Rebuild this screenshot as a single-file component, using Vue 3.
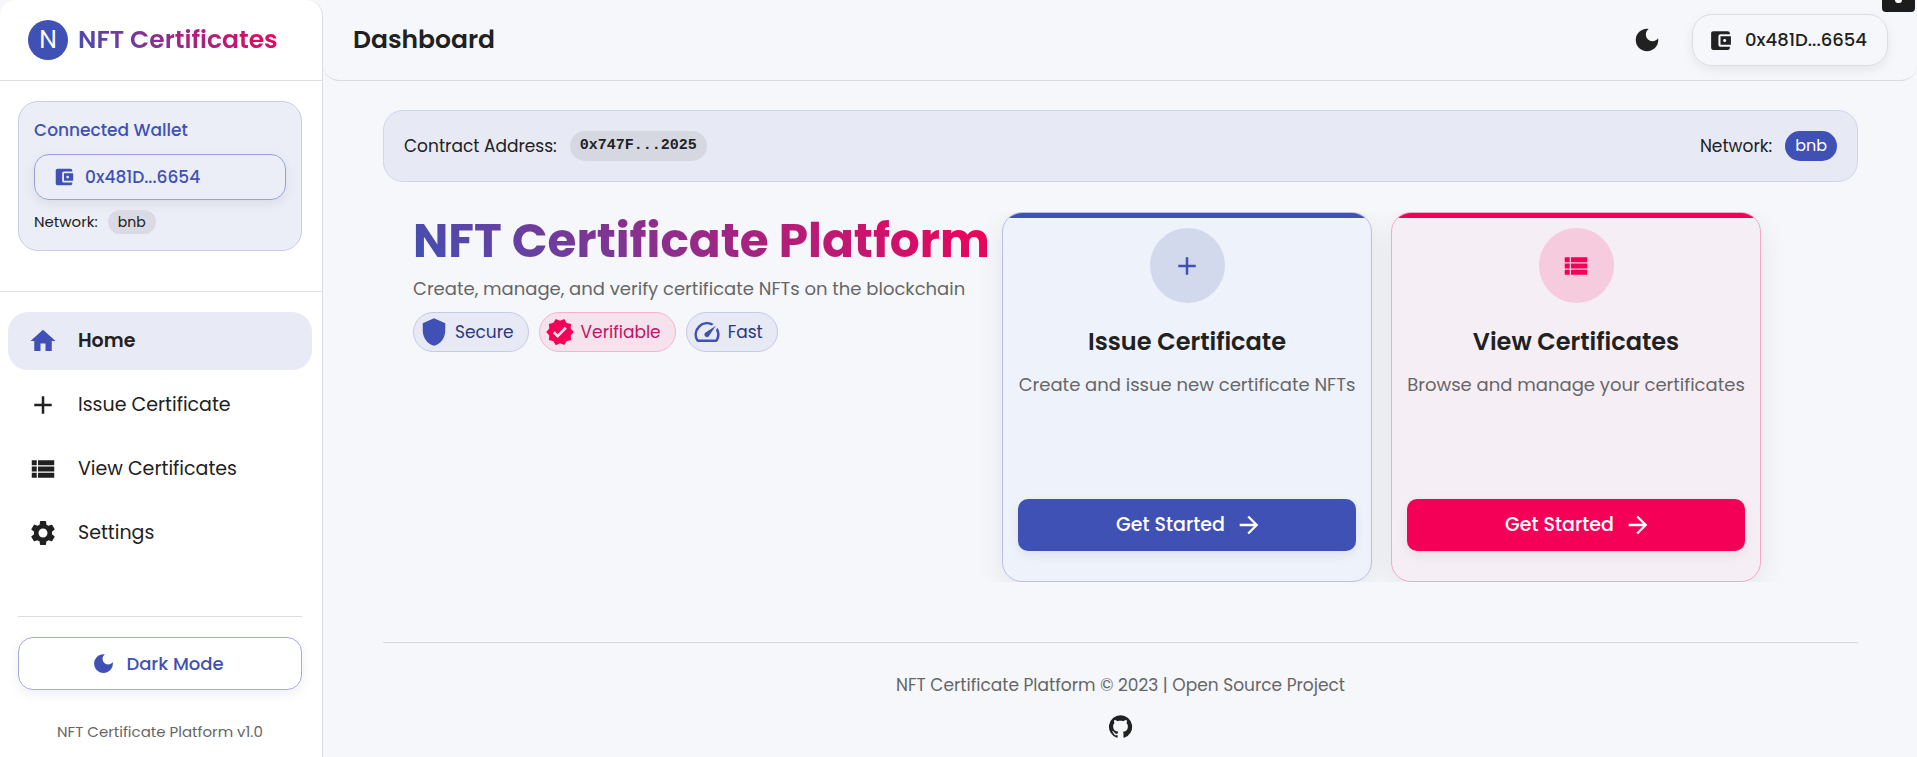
<script setup>
import { ref } from 'vue'

const icons = {
  home: 'M10 20v-6h4v6h5v-8h3L12 3 2 12h3v8z',
  add: 'M19 13h-6v6h-2v-6H5v-2h6V5h2v6h6z',
  list: 'M3 14h4v-4H3zm0 5h4v-4H3zM3 9h4V5H3zm5 5h13v-4H8zm0 5h13v-4H8zM8 5v4h13V5z',
  settings:
    'M19.14 12.94c.04-.3.06-.61.06-.94 0-.32-.02-.64-.07-.94l2.03-1.58c.18-.14.23-.41.12-.61l-1.92-3.32c-.12-.22-.37-.29-.59-.22l-2.39.96c-.5-.38-1.03-.7-1.62-.94l-.36-2.54c-.04-.24-.24-.41-.48-.41h-3.84c-.24 0-.43.17-.47.41l-.36 2.54c-.59.24-1.13.57-1.62.94l-2.39-.96c-.22-.08-.47 0-.59.22L2.74 8.87c-.12.21-.08.47.12.61l2.03 1.58c-.05.3-.09.63-.09.94s.02.64.07.94l-2.03 1.58c-.18.14-.23.41-.12.61l1.92 3.32c.12.22.37.29.59.22l2.39-.96c.5.38 1.03.7 1.62.94l.36 2.54c.05.24.24.41.48.41h3.84c.24 0 .44-.17.47-.41l.36-2.54c.59-.24 1.13-.56 1.62-.94l2.39.96c.22.08.47 0 .59-.22l1.92-3.32c.12-.22.07-.47-.12-.61zM12 15.6c-1.98 0-3.6-1.62-3.6-3.6s1.62-3.6 3.6-3.6 3.6 1.62 3.6 3.6-1.62 3.6-3.6 3.6z',
  wallet:
    'M21 18v1c0 1.1-.9 2-2 2H5c-1.11 0-2-.9-2-2V5c0-1.1.89-2 2-2h14c1.1 0 2 .9 2 2v1h-9c-1.11 0-2 .9-2 2v8c0 1.1.89 2 2 2zm-9-2h10V8H12zm4-2.5c-.83 0-1.5-.67-1.5-1.5s.67-1.5 1.5-1.5 1.5.67 1.5 1.5-.67 1.5-1.5 1.5z',
  moon: 'M12 3c-4.97 0-9 4.03-9 9s4.03 9 9 9 9-4.03 9-9c0-.46-.04-.92-.1-1.36-.98 1.37-2.58 2.26-4.4 2.26-2.98 0-5.4-2.42-5.4-5.4 0-1.81.89-3.42 2.26-4.4-.44-.06-.9-.1-1.36-.1z',
  shield: 'M12 1 3 5v6c0 5.55 3.84 10.74 9 12 5.16-1.26 9-6.45 9-12V5z',
  verified:
    'm23 12-2.44-2.79.34-3.69-3.61-.82-1.89-3.2L12 2.96 8.6 1.5 6.71 4.69 3.1 5.5l.34 3.7L1 12l2.44 2.79-.34 3.7 3.61.82L8.6 22.5l3.4-1.47 3.4 1.46 1.89-3.19 3.61-.82-.34-3.69zm-12.91 4.72-3.8-3.81 1.48-1.48 2.32 2.33 5.85-5.87 1.48 1.48z',
  speed:
    'm20.38 8.57-1.23 1.85a8 8 0 0 1-.22 7.58H5.07A8 8 0 0 1 15.58 6.85l1.85-1.23A10 10 0 0 0 3.35 19a2 2 0 0 0 1.72 1h13.85a2 2 0 0 0 1.74-1 10 10 0 0 0-.27-10.44zm-9.79 6.84a2 2 0 0 0 2.83 0l5.66-8.49-8.49 5.66a2 2 0 0 0 0 2.83',
  arrow: 'm12 4-1.41 1.41L16.17 11H4v2h12.17l-5.58 5.59L12 20l8-8z',
  github:
    'M12 1.27a11 11 0 0 0-3.48 21.46c.55.09.73-.28.73-.55v-1.84c-3.03.64-3.67-1.46-3.67-1.46-.55-1.29-1.28-1.65-1.28-1.65-.92-.65.1-.65.1-.65 1.1 0 1.73 1.1 1.73 1.1.92 1.65 2.57 1.2 3.21.92a2 2 0 0 1 .64-1.47c-2.47-.27-5.04-1.19-5.04-5.5 0-1.1.46-2.1 1.2-2.84a3.76 3.76 0 0 1 0-2.93s.91-.28 3.11 1.1c1.8-.49 3.7-.49 5.5 0 2.1-1.38 3.02-1.1 3.02-1.1a3.76 3.76 0 0 1 .1 2.93c.83.74 1.2 1.74 1.2 2.94 0 4.21-2.57 5.13-5.04 5.4.45.37.82.92.82 2.02v3.03c0 .27.1.64.73.55A11 11 0 0 0 12 1.27',
}

const wallet = '0x481D...6654'
const current = ref('Home')

const nav = [
  { label: 'Home', icon: 'home' },
  { label: 'Issue Certificate', icon: 'add' },
  { label: 'View Certificates', icon: 'list' },
  { label: 'Settings', icon: 'settings' },
]
const features = [
  { label: 'Secure', icon: 'shield', tone: 'blue' },
  { label: 'Verifiable', icon: 'verified', tone: 'pink' },
  { label: 'Fast', icon: 'speed', tone: 'blue' },
]
const cards = [
  { title: 'Issue Certificate', text: 'Create and issue new certificate NFTs', icon: 'add', tone: 'blue' },
  { title: 'View Certificates', text: 'Browse and manage your certificates', icon: 'list', tone: 'pink' },
]
</script>

<template>
  <div class="app">
    <aside class="sidebar">
      <div class="brand">
        <span class="logo">N</span>
        <span class="brand-name">NFT Certificates</span>
      </div>

      <div class="wallet-area">
        <section class="wallet-card">
          <h2 class="wallet-title">Connected Wallet</h2>
          <button class="wallet-button" type="button">
            <svg class="icon-sm" viewBox="0 0 24 24"><path :d="icons.wallet" /></svg>
            <span>{{ wallet }}</span>
          </button>
          <p class="wallet-network">Network: <span class="tag">bnb</span></p>
        </section>
      </div>

      <nav class="nav">
        <a
          v-for="item in nav"
          :key="item.label"
          href="#"
          class="nav-item"
          :class="{ active: item.label === current }"
          @click.prevent="current = item.label"
        >
          <svg class="icon" viewBox="0 0 24 24"><path :d="icons[item.icon]" /></svg>
          <span>{{ item.label }}</span>
        </a>
      </nav>

      <div class="sidebar-foot">
        <button class="mode-button" type="button">
          <svg class="icon-md" viewBox="0 0 24 24"><path :d="icons.moon" /></svg>
          <span>Dark Mode</span>
        </button>
        <p class="version">NFT Certificate Platform v1.0</p>
      </div>
    </aside>

    <div class="main">
      <header class="topbar">
        <h1 class="page-title">Dashboard</h1>
        <div class="top-actions">
          <button class="icon-button" type="button" aria-label="Toggle dark mode">
            <svg class="icon" viewBox="0 0 24 24"><path :d="icons.moon" /></svg>
          </button>
          <button class="account" type="button">
            <svg class="icon-md" viewBox="0 0 24 24"><path :d="icons.wallet" /></svg>
            <span>{{ wallet }}</span>
          </button>
        </div>
      </header>

      <main class="content">
        <section class="contract">
          <p class="pair">Contract Address: <code class="address">0x747F...2025</code></p>
          <p class="pair">Network: <span class="network">bnb</span></p>
        </section>

        <section class="hero">
          <div class="intro">
            <h2 class="hero-title">NFT Certificate Platform</h2>
            <p class="hero-text">Create, manage, and verify certificate NFTs on the blockchain</p>
            <ul class="chips">
              <li v-for="f in features" :key="f.label" class="chip" :class="f.tone">
                <svg class="icon" viewBox="0 0 24 24"><path :d="icons[f.icon]" /></svg>
                <span>{{ f.label }}</span>
              </li>
            </ul>
          </div>

          <div class="cards">
            <article v-for="card in cards" :key="card.title" class="card" :class="card.tone">
              <span class="card-icon">
                <svg class="icon" viewBox="0 0 24 24"><path :d="icons[card.icon]" /></svg>
              </span>
              <h3 class="card-title">{{ card.title }}</h3>
              <p class="card-text">{{ card.text }}</p>
              <button class="card-button" type="button">
                <span>Get Started</span>
                <svg class="icon-lg" viewBox="0 0 24 24"><path :d="icons.arrow" /></svg>
              </button>
            </article>
          </div>
        </section>

        <footer class="footer">
          <p class="copyright">NFT Certificate Platform © 2023 | Open Source Project</p>
          <a href="#" class="github" aria-label="GitHub">
            <svg class="icon-md" viewBox="0 0 24 24"><path :d="icons.github" /></svg>
          </a>
        </footer>
      </main>
    </div>

    <span class="corner-widget"></span>
  </div>
</template>

<style>
body {
  margin: 0;
  background: #f5f7fb;
}
</style>

<style scoped>
.app {
  --blue: #3f51b5;
  --pink: #f50057;
  --ink: #212121;
  --muted: #666;
  --line: #dcdde0;
  --shadow: 0 4px 12px rgba(0, 0, 0, 0.07);
  position: relative;
  display: flex;
  min-height: 100vh;
  overflow: hidden;
  color: var(--ink);
  font: 18px/24px Poppins, Inter, "Open Sans", sans-serif;
}
.app * {
  box-sizing: border-box;
}
h1, h2, h3, p, ul {
  margin: 0;
  padding: 0;
  font-weight: 400;
}
button {
  font: inherit;
  color: inherit;
  background: none;
  border: 0;
  padding: 0;
  cursor: pointer;
}
a {
  color: inherit;
  text-decoration: none;
}
svg {
  display: block;
  flex: none;
  fill: currentColor;
}
.icon { width: 30px; height: 30px; }
.icon-lg { width: 28px; height: 28px; }
.icon-md { width: 25px; height: 25px; }
.icon-sm { width: 22px; height: 22px; }

/* Sidebar */
.sidebar {
  display: flex;
  flex: none;
  flex-direction: column;
  width: 323px;
  background: #fff;
  border-right: 1px solid var(--line);
  border-radius: 16px 16px 0 0;
}
.brand {
  display: flex;
  align-items: center;
  gap: 10px;
  height: 81px;
  padding: 0 28px;
  border-bottom: 1px solid var(--line);
}
.logo {
  display: grid;
  place-items: center;
  width: 40px;
  height: 40px;
  border-radius: 50%;
  background: var(--blue);
  color: #fff;
  font-size: 25px;
  line-height: 40px;
}
.brand-name,
.hero-title {
  color: transparent;
  background: linear-gradient(45deg, var(--blue), var(--pink));
  -webkit-background-clip: text;
  background-clip: text;
}
.brand-name {
  font-size: 25px;
  line-height: 32px;
  font-weight: 600;
}
.wallet-area {
  padding: 20px 20px 40px 18px;
  border-bottom: 1px solid var(--line);
}
.wallet-card {
  padding: 16px 15px;
  border: 1px solid #c8cce9;
  border-radius: 20px;
  background: #ebedf7;
}
.wallet-title {
  color: var(--blue);
  font-size: 17px;
  font-weight: 500;
}
.wallet-button {
  display: flex;
  align-items: center;
  gap: 10px;
  width: 100%;
  height: 46px;
  margin-top: 12px;
  padding: 0 18px;
  border: 1px solid #98a2da;
  border-radius: 15px;
  color: var(--blue);
  font-size: 17px;
  font-weight: 500;
  box-shadow: var(--shadow);
}
.wallet-network {
  display: flex;
  align-items: center;
  gap: 10px;
  margin-top: 10px;
  font-size: 15px;
}
.tag {
  padding: 0 10px;
  border-radius: 12px;
  background: #dadae4;
  font-size: 14px;
}
.nav {
  display: flex;
  flex-direction: column;
  gap: 6px;
  padding: 20px 10px 0 8px;
  font-size: 19px;
}
.nav-item {
  display: flex;
  align-items: center;
  gap: 20px;
  height: 58px;
  padding: 0 20px;
  border-radius: 20px;
}
.active {
  background: #e8eaf6;
  font-weight: 600;
}
.active svg {
  color: var(--blue);
}
.sidebar-foot {
  margin: auto 20px 0 18px;
  padding: 20px 0 13px;
  border-top: 1px solid var(--line);
  text-align: center;
}
.mode-button {
  display: flex;
  align-items: center;
  justify-content: center;
  gap: 10px;
  width: 100%;
  height: 53px;
  border: 1px solid #a3aadd;
  border-radius: 15px;
  color: var(--blue);
  font-weight: 500;
  box-shadow: var(--shadow);
}
.mode-button svg {
  margin-left: -5px;
}
.version {
  margin-top: 30px;
  color: var(--muted);
  font-size: 15px;
}

/* Top bar */
.main {
  flex: 1;
  min-width: 0;
}
.topbar {
  display: flex;
  align-items: center;
  justify-content: space-between;
  height: 81px;
  padding: 0 29px 0 30px;
  border-bottom: 1px solid #d8dade;
  border-radius: 0 0 16px 16px;
}
.page-title {
  font-size: 25px;
  line-height: 32px;
  font-weight: 600;
}
.top-actions,
.account {
  display: flex;
  align-items: center;
}
.top-actions {
  gap: 20px;
}
.icon-button {
  padding: 10px;
}
.account {
  gap: 12px;
  height: 52px;
  padding: 0 20px 0 15px;
  border: 1px solid var(--line);
  border-radius: 20px;
  font-weight: 500;
  box-shadow: var(--shadow);
}

/* Content */
.content {
  padding: 29px 59px 0 60px;
}
.contract {
  display: flex;
  align-items: center;
  justify-content: space-between;
  height: 72px;
  padding: 0 20px;
  border: 1px solid #d0d5ed;
  border-radius: 20px;
  background: #e7e9f4;
  font-size: 17px;
}
.pair {
  display: flex;
  align-items: center;
  gap: 13px;
}
.address,
.network {
  padding: 0 10px;
  border-radius: 15px;
  line-height: 30px;
}
.address {
  background: #d5d8e1;
  font-family: "Liberation Mono", monospace;
  font-size: 15px;
  font-weight: 700;
}
.network {
  background: var(--blue);
  color: #fff;
  font-size: 16px;
}
.hero {
  display: flex;
  gap: 10px;
  margin-top: 30px;
  padding: 0 97px 0 30px;
  overflow-y: clip;
}
.intro {
  flex: 1;
}
.hero-title {
  font-size: 47px;
  line-height: 58px;
  font-weight: 700;
  white-space: nowrap;
}
.hero-text {
  margin-top: 7px;
  color: var(--muted);
}
.chips {
  display: flex;
  gap: 10px;
  margin-top: 11px;
  list-style: none;
}
.chip {
  display: flex;
  align-items: center;
  gap: 6px;
  height: 40px;
  padding: 0 14px 0 5px;
  border: 1px solid #c5cae9;
  border-radius: 20px;
  background: #e7e9f4;
  color: #2c387e;
  font-size: 17px;
}
.chip svg {
  color: var(--blue);
}
.chip.pink {
  border-color: #f7b3cb;
  background: #f6e2ec;
  color: #c51162;
}
.chip.pink svg {
  color: var(--pink);
}
.cards {
  display: flex;
  gap: 19px;
}
.card {
  position: relative;
  display: flex;
  flex: none;
  flex-direction: column;
  align-items: center;
  width: 370px;
  min-height: 370px;
  padding: 15px 15px 30px;
  border: 1px solid #b9c0e4;
  border-radius: 20px;
  background: #eef2fa;
  box-shadow: 0 8px 30px rgba(0, 0, 0, 0.08);
  --tone: var(--blue);
}
.card.pink {
  border-color: #f5a9c5;
  background: #f5eef5;
  --tone: var(--pink);
}
/* Coloured strip that follows the rounded top corners */
.card::before {
  content: "";
  position: absolute;
  inset: 0;
  border-radius: 19px;
  background: linear-gradient(var(--tone) 5px, transparent 5px);
}
.card-icon {
  display: grid;
  place-items: center;
  width: 75px;
  height: 75px;
  border-radius: 50%;
  background: #d3d9ed;
  color: var(--tone);
}
.pink .card-icon {
  background: #f6cbde;
}
.card-title {
  margin-top: 23px;
  font-size: 24px;
  line-height: 32px;
  font-weight: 600;
}
.card-text {
  margin-top: 15px;
  color: var(--muted);
}
.card-button {
  position: relative;
  display: flex;
  align-items: center;
  justify-content: center;
  gap: 10px;
  width: 100%;
  height: 52px;
  margin-top: auto;
  border-radius: 10px;
  background: var(--tone);
  color: #fff;
  font-size: 19px;
  font-weight: 500;
  box-shadow: var(--shadow);
}
.card-button svg {
  margin-right: -5px;
}

/* Footer */
.footer {
  display: flex;
  flex-direction: column;
  align-items: center;
  gap: 17px;
  margin-top: 60px;
  padding: 30px 0 17px;
  border-top: 1px solid #d8dade;
}
.copyright {
  color: var(--muted);
  font-size: 17px;
}
.corner-widget {
  position: absolute;
  top: 0;
  right: 2px;
  width: 33px;
  height: 12px;
  border-radius: 0 0 4px 4px;
  background: #1c1c1c;
}
.corner-widget::after {
  content: "";
  position: absolute;
  top: 0;
  left: 13px;
  width: 7px;
  height: 3px;
  border-radius: 0 0 3px 3px;
  background: #fff;
}
</style>
